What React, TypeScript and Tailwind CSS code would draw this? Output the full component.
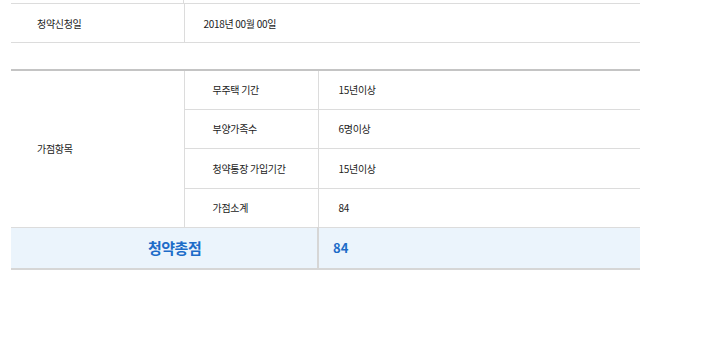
const font = "font-['Noto_Sans_CJK_KR','Noto_Sans',sans-serif]";

const scoreRows = [
  { label: "무주택 기간", value: "15년이상", h: "h-[39px]" },
  { label: "부양가족수", value: "6명이상", h: "h-[39px]" },
  { label: "청약통장 가입기간", value: "15년이상", h: "h-[40px]" },
  { label: "가점소계", value: "84", h: "h-[39px]" },
];

export default function App() {
  return (
    <div className={`w-[720px] h-[340px] bg-white text-[#222] ${font}`}>
      <div className="ml-[11px] w-[629px]">
        {/* tail of the row above */}
        <div className="flex h-[3px]">
          <div className="w-[173px] border-r border-[#dcdcdc]" />
        </div>

        <table className="w-full border-collapse table-fixed text-[10px] tracking-[-0.3px]">
          <colgroup>
            <col className="w-[173px]" />
            <col />
          </colgroup>
          <tbody>
            <tr className="h-[39px]">
              <td className="border-y border-r border-[#dcdcdc] pl-[26px]">청약신청일</td>
              <td className="border-y border-[#dcdcdc] pl-[19px]">2018년 00월 00일</td>
            </tr>
          </tbody>
        </table>

        <div className="h-[26px]" />

        <table className="w-full border-collapse table-fixed text-[10px] tracking-[-0.3px] border-t-2 border-[#c4c4c4]">
          <colgroup>
            <col className="w-[173px]" />
            <col className="w-[134px]" />
            <col />
          </colgroup>
          <tbody>
            {scoreRows.map((row, i) => (
              <tr key={row.label} className={row.h}>
                {i === 0 && (
                  <td rowSpan={4} className="border-r border-b border-[#dcdcdc] pl-[26px]">
                    가점항목
                  </td>
                )}
                <td className="border-r border-b border-[#dcdcdc] pl-[28px]">{row.label}</td>
                <td className="border-b border-[#dcdcdc] pl-[20px]">{row.value}</td>
              </tr>
            ))}
            <tr className="h-[42px] bg-[#ebf4fc] text-[#1d6cc8] font-bold">
              <td colSpan={2} className="border-r-2 border-b-2 border-[#d6d6d6] pl-[137px] text-[15px] tracking-[-0.5px]">
                청약총점
              </td>
              <td className="border-b-2 border-[#d6d6d6] pl-[14px] text-[13px] tracking-normal">84</td>
            </tr>
          </tbody>
        </table>
      </div>
    </div>
  );
}
